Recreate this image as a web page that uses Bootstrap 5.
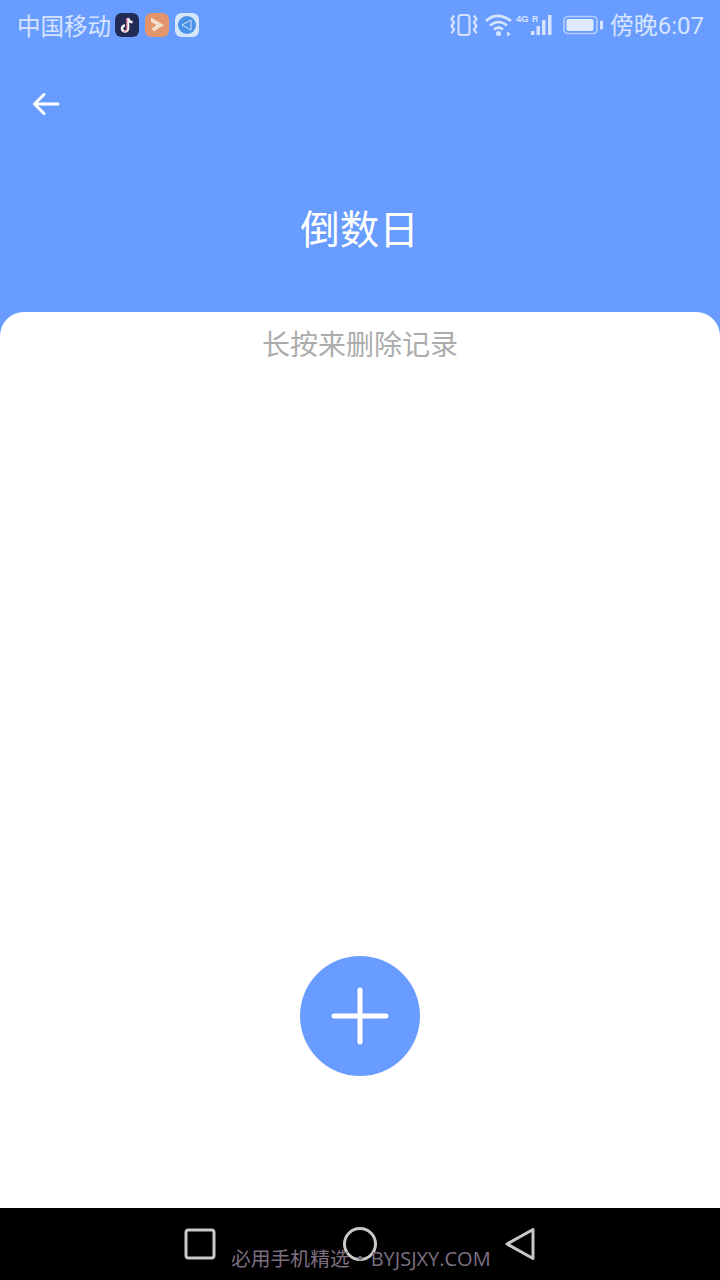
<!doctype html>
<html lang="zh">
<head>
<meta charset="utf-8">
<title>倒数日</title>
<link href="https://cdn.jsdelivr.net/npm/bootstrap@5.3.0/dist/css/bootstrap.min.css" rel="stylesheet">
<style>
html,body{height:1280px;margin:0;overflow:hidden}
body{width:720px;background:#699cff;font-family:"Noto Sans CJK SC","Liberation Sans",sans-serif}
.screen{height:1280px}
.status{height:50px;padding:0 16px 1px 17px;color:#d7e4ff;font-size:23.5px;line-height:48px}
.tray{gap:2px}
.carrier{margin-right:2px}
.appicon{width:24px;height:24px;border-radius:6px;display:block}
.clock{font-family:"Roboto","Noto Sans CJK SC",sans-serif;font-size:24px;margin-left:7px}
.clock .cjk{font-family:"Noto Sans CJK SC",sans-serif}
.ic-wifi{margin-left:5px}
.ic-signal{margin-left:2px}
.ic-batt{margin-left:10px}
.topbar{height:262px}
.backbtn{position:absolute;left:32px;top:40px;width:28px;height:28px;padding:0;border:0;background:none;line-height:0}
.titletext{font-size:39.5px;color:#fff;line-height:1;margin:0;font-weight:400;padding-top:157px;padding-right:1px}
.sheet{background:#fff;border-radius:24px 24px 0 0;min-height:0}
.hint{font-size:28px;line-height:1;color:#acacac;padding-top:17px}
.fabwrap{padding-bottom:132px}
.fab{width:120px;height:120px;border-radius:50%;background:#699cff;border:0;padding:0;line-height:0}
.navbarbottom{height:72px;background:#000;flex:none}
.navicons{gap:124px}
.wm{position:absolute;left:231px;top:1247px;font-size:19.8px;line-height:22px;color:#7d6f80;white-space:nowrap;font-family:"Noto Sans CJK SC","Open Sans",sans-serif}
.wm .lat{font-family:"Open Sans",sans-serif;font-size:20px}
.wm .sep{display:inline-block;width:21px;text-align:center}
</style>
</head>
<body>
<div class="screen d-flex flex-column position-relative">
  <div class="status d-flex justify-content-between align-items-center">
    <div class="tray d-flex align-items-center">
      <span class="carrier">中国移动</span>
      <svg class="appicon" viewBox="0 0 24 24" aria-hidden="true"><rect width="24" height="24" rx="6" fill="#222b55"/><path d="M13 5v10.500a3 3 0 1 1-3-3M13 5c.5 2.600 2 4 4.600 4.300" fill="none" stroke="#f4f0f4" stroke-width="2.600"/><path d="M11.800 5.500v10a3 3 0 0 1-3 3" fill="none" stroke="#e5607f" stroke-width="1"/></svg>
      <svg class="appicon ms-1" viewBox="0 0 24 24" aria-hidden="true"><rect width="24" height="24" rx="6" fill="#e2946a"/><path d="M6 4.500l13 7.500-10 6.500-2.500-3 5-3.500-5.500-3z" fill="#f5ddd0"/></svg>
      <svg class="appicon ms-1" viewBox="0 0 24 24" aria-hidden="true"><rect width="24" height="24" rx="6" fill="#d5e6fb"/><circle cx="12" cy="12" r="9" fill="#4a92e8"/><path d="M7 12l9-5v10z" fill="none" stroke="#cfe3fa" stroke-width="1"/></svg>
    </div>
    <div class="d-flex align-items-center">
      <svg width="30" height="24" viewBox="0 0 30 24" fill="none" stroke="#d7e4ff" aria-hidden="true"><rect x="9.500" y="2" width="11" height="20" rx="2.500" stroke-width="2"/><path d="M5 2.500L2.500 6 5 9.500 2.500 13 5 16.500 2.500 20.500M25 2.500L27.500 6 25 9.500 27.500 13 25 16.500 27.500 20.500" stroke-width="2.200"/></svg>
      <svg class="ic-wifi" width="30" height="24" viewBox="0 0 30 24" fill="none" stroke="#d7e4ff" stroke-width="2.600" aria-hidden="true"><path d="M2 8C9 1.500 18 1.500 27 8M6 12.500c5.500-4.500 11.500-4.500 17 0M10 16.500c3-2.500 6-2.500 9 0"/><circle cx="14.500" cy="20.500" r="2.500" fill="#d7e4ff" stroke="none"/><path d="M23 18.500l4 2.500-4 2.500z" fill="#d7e4ff" stroke="none"/></svg>
      <svg class="ic-signal" width="36" height="24" viewBox="0 0 36 24" aria-hidden="true" fill="#d7e4ff"><text x="0" y="9" font-size="9.500" font-weight="700" font-family="Liberation Sans">4G</text><text x="16" y="9" font-size="8.500" font-weight="700" font-family="Liberation Sans">R</text><rect x="15" y="18" width="3.500" height="4"/><rect x="20.500" y="13" width="3.500" height="9"/><rect x="26" y="7" width="3.500" height="15"/><rect x="32" y="2" width="3.500" height="20"/></svg>
      <svg class="ic-batt" width="41" height="20" viewBox="0 0 41 20" aria-hidden="true"><rect x="2" y="1.500" width="33" height="17" rx="4" fill="none" stroke="#b7cffd" stroke-width="1.600"/><rect x="4.500" y="4" width="27" height="12" rx="2" fill="#dfe9ff"/><rect x="38" y="5.500" width="3" height="9" rx="1" fill="#d7e4ff"/></svg>
      <span class="clock"><span class="cjk">傍晚</span>6:07</span>
    </div>
  </div>
  <div class="topbar position-relative text-center">
    <button class="backbtn" type="button" aria-label="返回">
      <svg width="28" height="28" viewBox="0 0 28 28" fill="none" stroke="#fff" stroke-width="3" stroke-linecap="round" stroke-linejoin="round"><path d="M26 14H3M12 4.500L2.500 14 12 23.500"/></svg>
    </button>
    <h1 class="titletext">倒数日</h1>
  </div>
  <div class="sheet flex-grow-1 d-flex flex-column align-items-center justify-content-between">
    <div class="hint">长按来删除记录</div>
    <div class="fabwrap">
      <button class="fab d-block" type="button" aria-label="添加">
        <svg width="120" height="120" viewBox="0 0 120 120" stroke="#fff" stroke-width="5" stroke-linecap="round"><path d="M60 34v52M34 60h52"/></svg>
      </button>
    </div>
  </div>
  <div class="navbarbottom d-flex justify-content-center align-items-center">
    <div class="navicons d-flex align-items-center">
      <svg width="36" height="36" viewBox="0 0 36 36" fill="none" stroke="#c8c8c8" stroke-width="3" aria-hidden="true"><rect x="4" y="4" width="28" height="28" rx="2.500"/></svg>
      <svg width="36" height="36" viewBox="0 0 36 36" fill="none" stroke="#c8c8c8" stroke-width="3" aria-hidden="true"><circle cx="18" cy="18" r="15.500"/></svg>
      <svg width="36" height="36" viewBox="0 0 36 36" fill="none" stroke="#c8c8c8" stroke-width="3" stroke-linejoin="round" aria-hidden="true"><path d="M31 3.500v29L5 18z"/></svg>
    </div>
  </div>
  <div class="wm">必用手机精选<span class="sep">·</span><span class="lat">BYJSJXY.COM</span></div>
</div>
<script src="https://cdn.jsdelivr.net/npm/bootstrap@5.3.0/dist/js/bootstrap.bundle.min.js"></script>
</body>
</html>
